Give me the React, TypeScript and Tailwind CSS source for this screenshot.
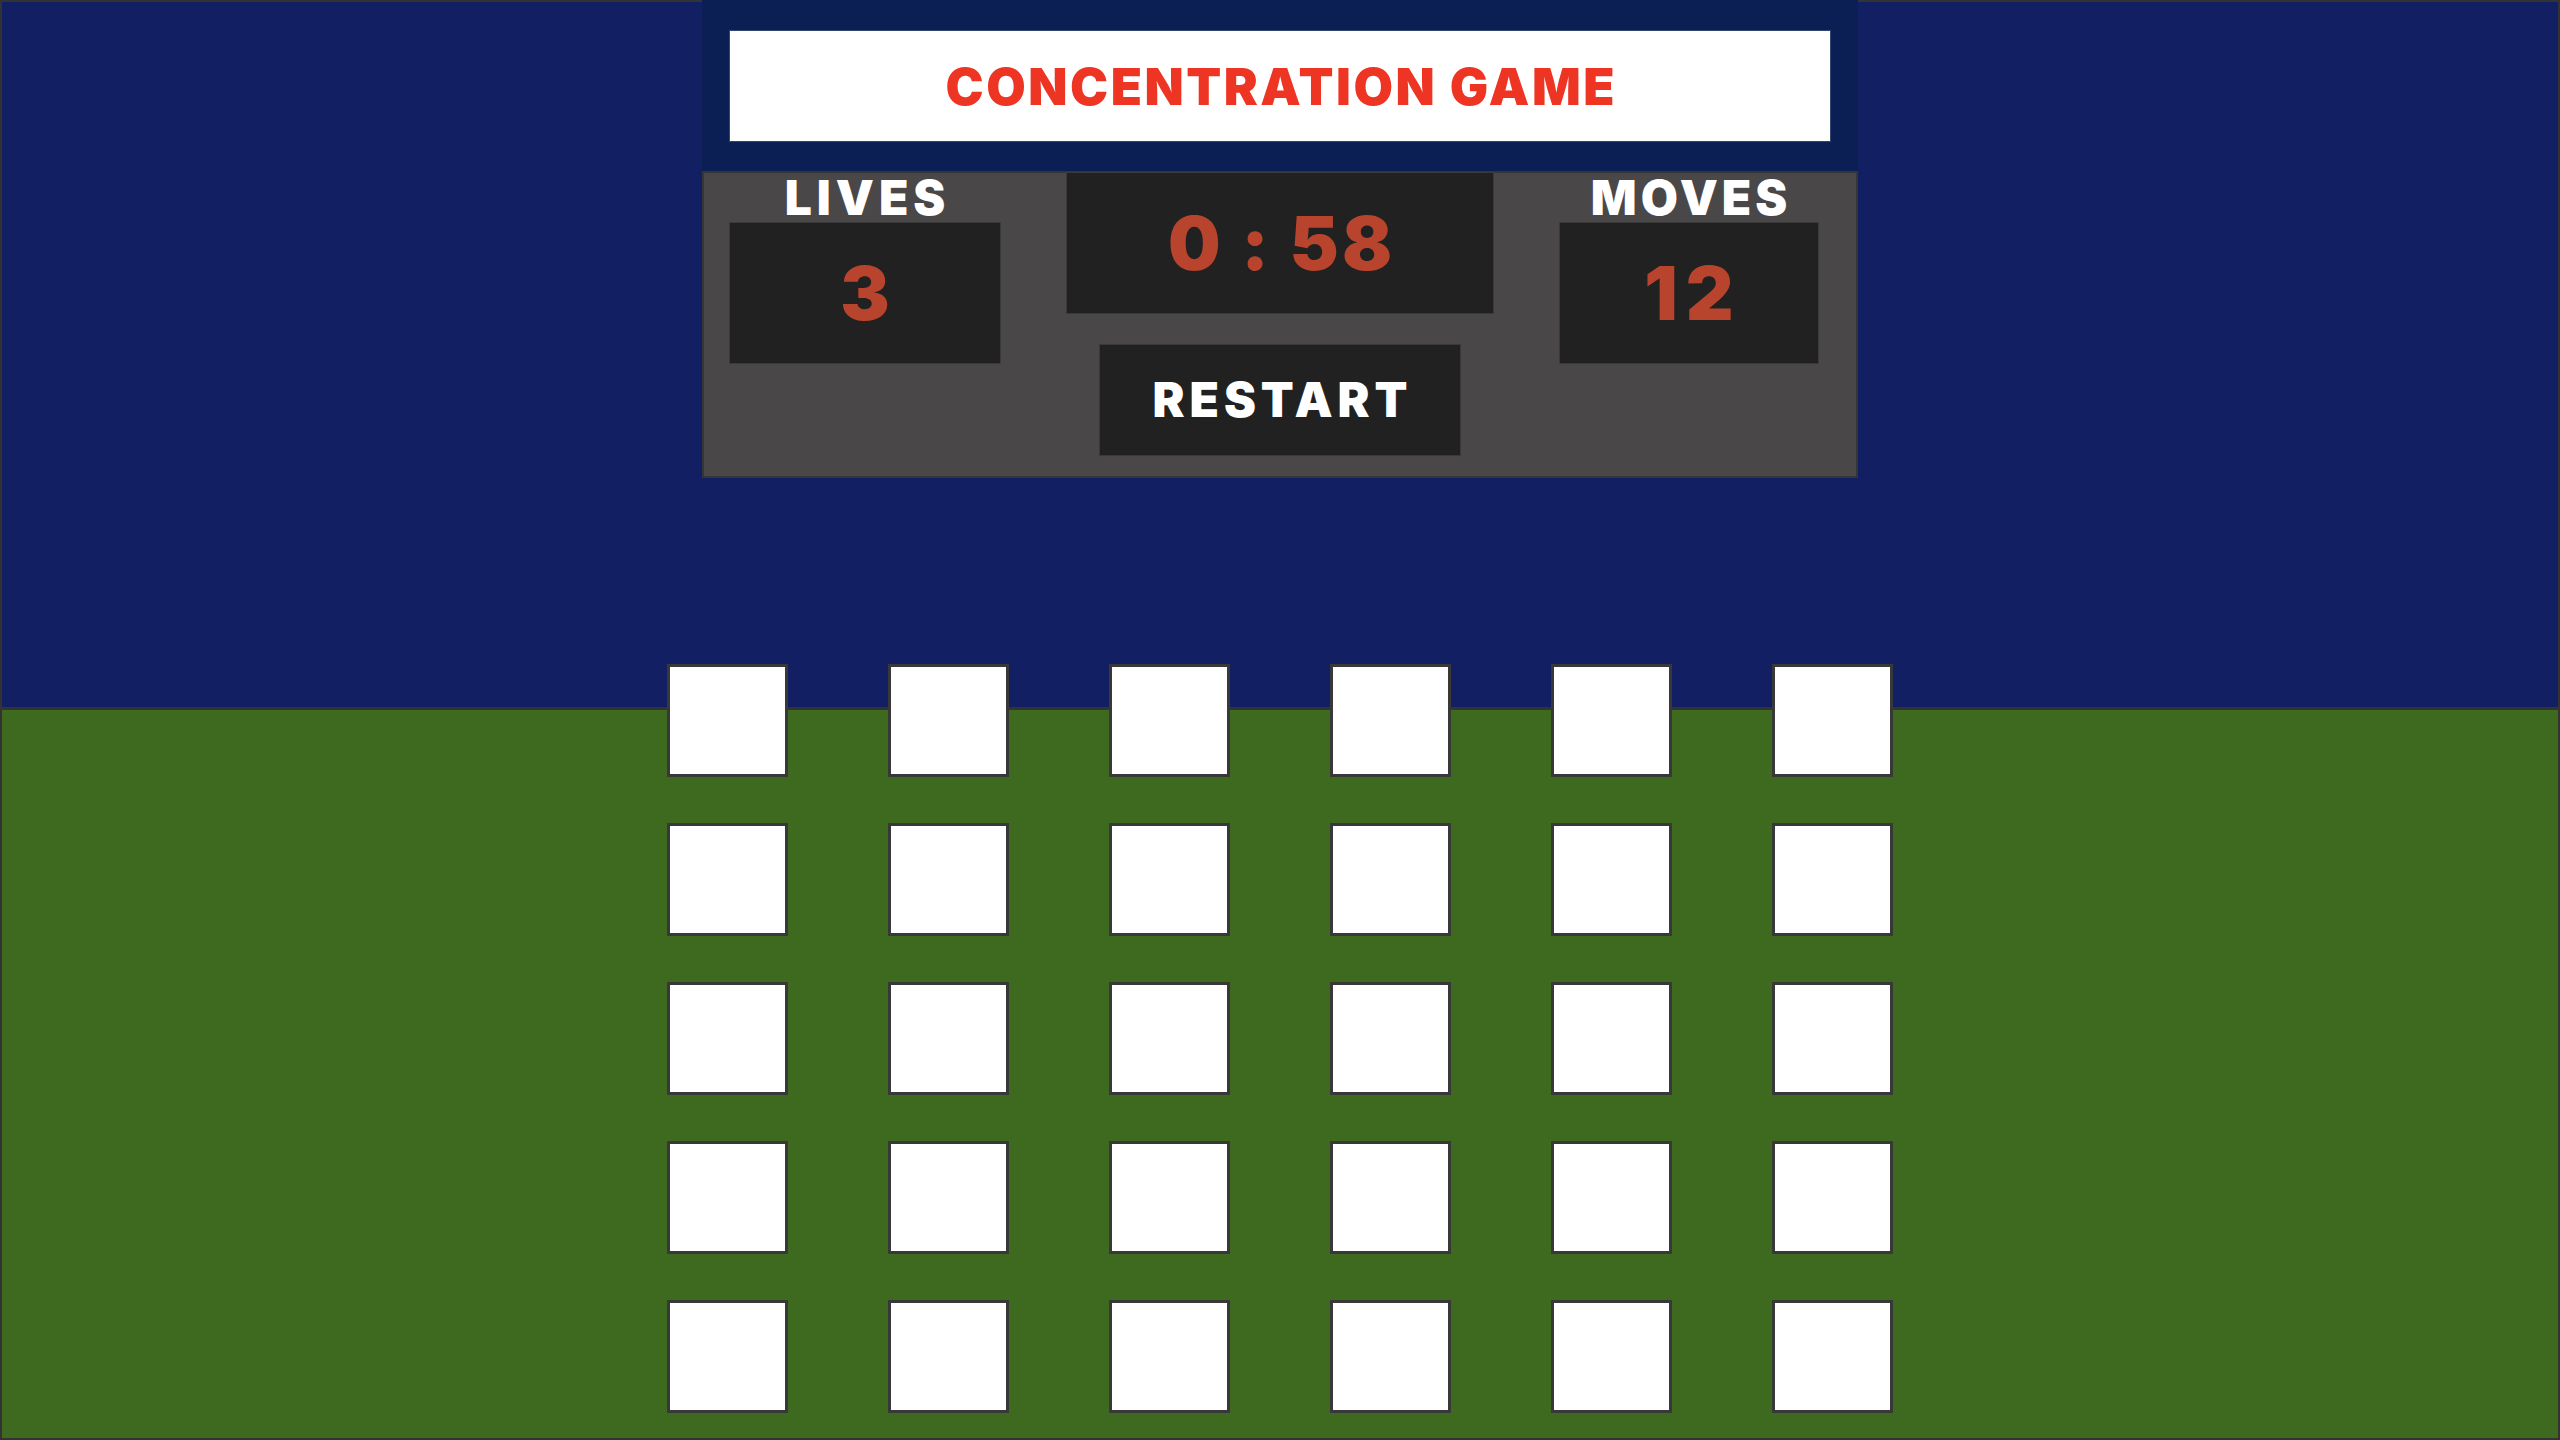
import React from "react";

const CARD_COUNT = 30;

const StatBox: React.FC<{ label: string; value: string; width: string; tracking: string }> = ({
  label,
  value,
  width,
  tracking,
}) => (
  <div className={`flex flex-col items-center ${width}`}>
    <div className={`mt-[1px] h-[48px] text-[48px] leading-none text-white ${tracking}`}>{label}</div>
    <div className="flex h-[142px] w-full items-center justify-center border border-[#3a3a3a] bg-[#212121] pl-[8px] text-[74px] leading-none tracking-[8px] text-[#b9442d]">
      {value}
    </div>
  </div>
);

export default function App() {
  return (
    <div className="flex h-[1440px] w-full flex-col items-center border-2 border-[#333] bg-[linear-gradient(to_bottom,#121f63_0px,#121f63_705px,#333_705px,#333_708px,#3d6a1e_708px)] font-['Inter',sans-serif] font-black">
      {/* header */}
      <div className="-mt-[2px] w-[1156px] bg-[#0b1f55] px-[27px] pt-[30px] pb-[29px]">
        <div className="flex h-[112px] items-center justify-center border border-[#34466f] bg-white pl-[2.5px] text-[51px] leading-none tracking-[2.5px] text-[#ee3524]">
          CONCENTRATION GAME
        </div>
      </div>

      {/* scoreboard */}
      <div className="flex h-[307px] w-[1156px] items-start border-2 border-[#353535] bg-[#494747]">
        <div className="ml-[25px]">
          <StatBox label="LIVES" value="3" width="w-[272px]" tracking="pl-[5px] tracking-[5px]" />
        </div>
        <div className="ml-[65px] -mt-[1px] flex w-[428px] flex-col items-center">
          <div className="flex h-[142px] w-full items-center justify-center border border-[#3a3a3a] bg-[#212121] pl-[3px] text-[74px] leading-none tracking-[3px] text-[#b9442d]">
            0 : 58
          </div>
          <button className="mt-[30px] flex h-[112px] w-[362px] items-center justify-center border border-[#3a3a3a] bg-[#212121] pl-[5px] text-[48px] leading-none tracking-[5px] text-white">
            RESTART
          </button>
        </div>
        <div className="ml-[65px]">
          <StatBox label="MOVES" value="12" width="w-[260px]" tracking="pl-[4px] tracking-[4px]" />
        </div>
      </div>

      {/* cards */}
      <div className="mt-[186px] grid grid-cols-[repeat(6,121px)] gap-x-[100px] gap-y-[46px]">
        {Array.from({ length: CARD_COUNT }).map((_, i) => (
          <div key={i} className="h-[113px] border-[3px] border-[#383838] bg-white" />
        ))}
      </div>
    </div>
  );
}
